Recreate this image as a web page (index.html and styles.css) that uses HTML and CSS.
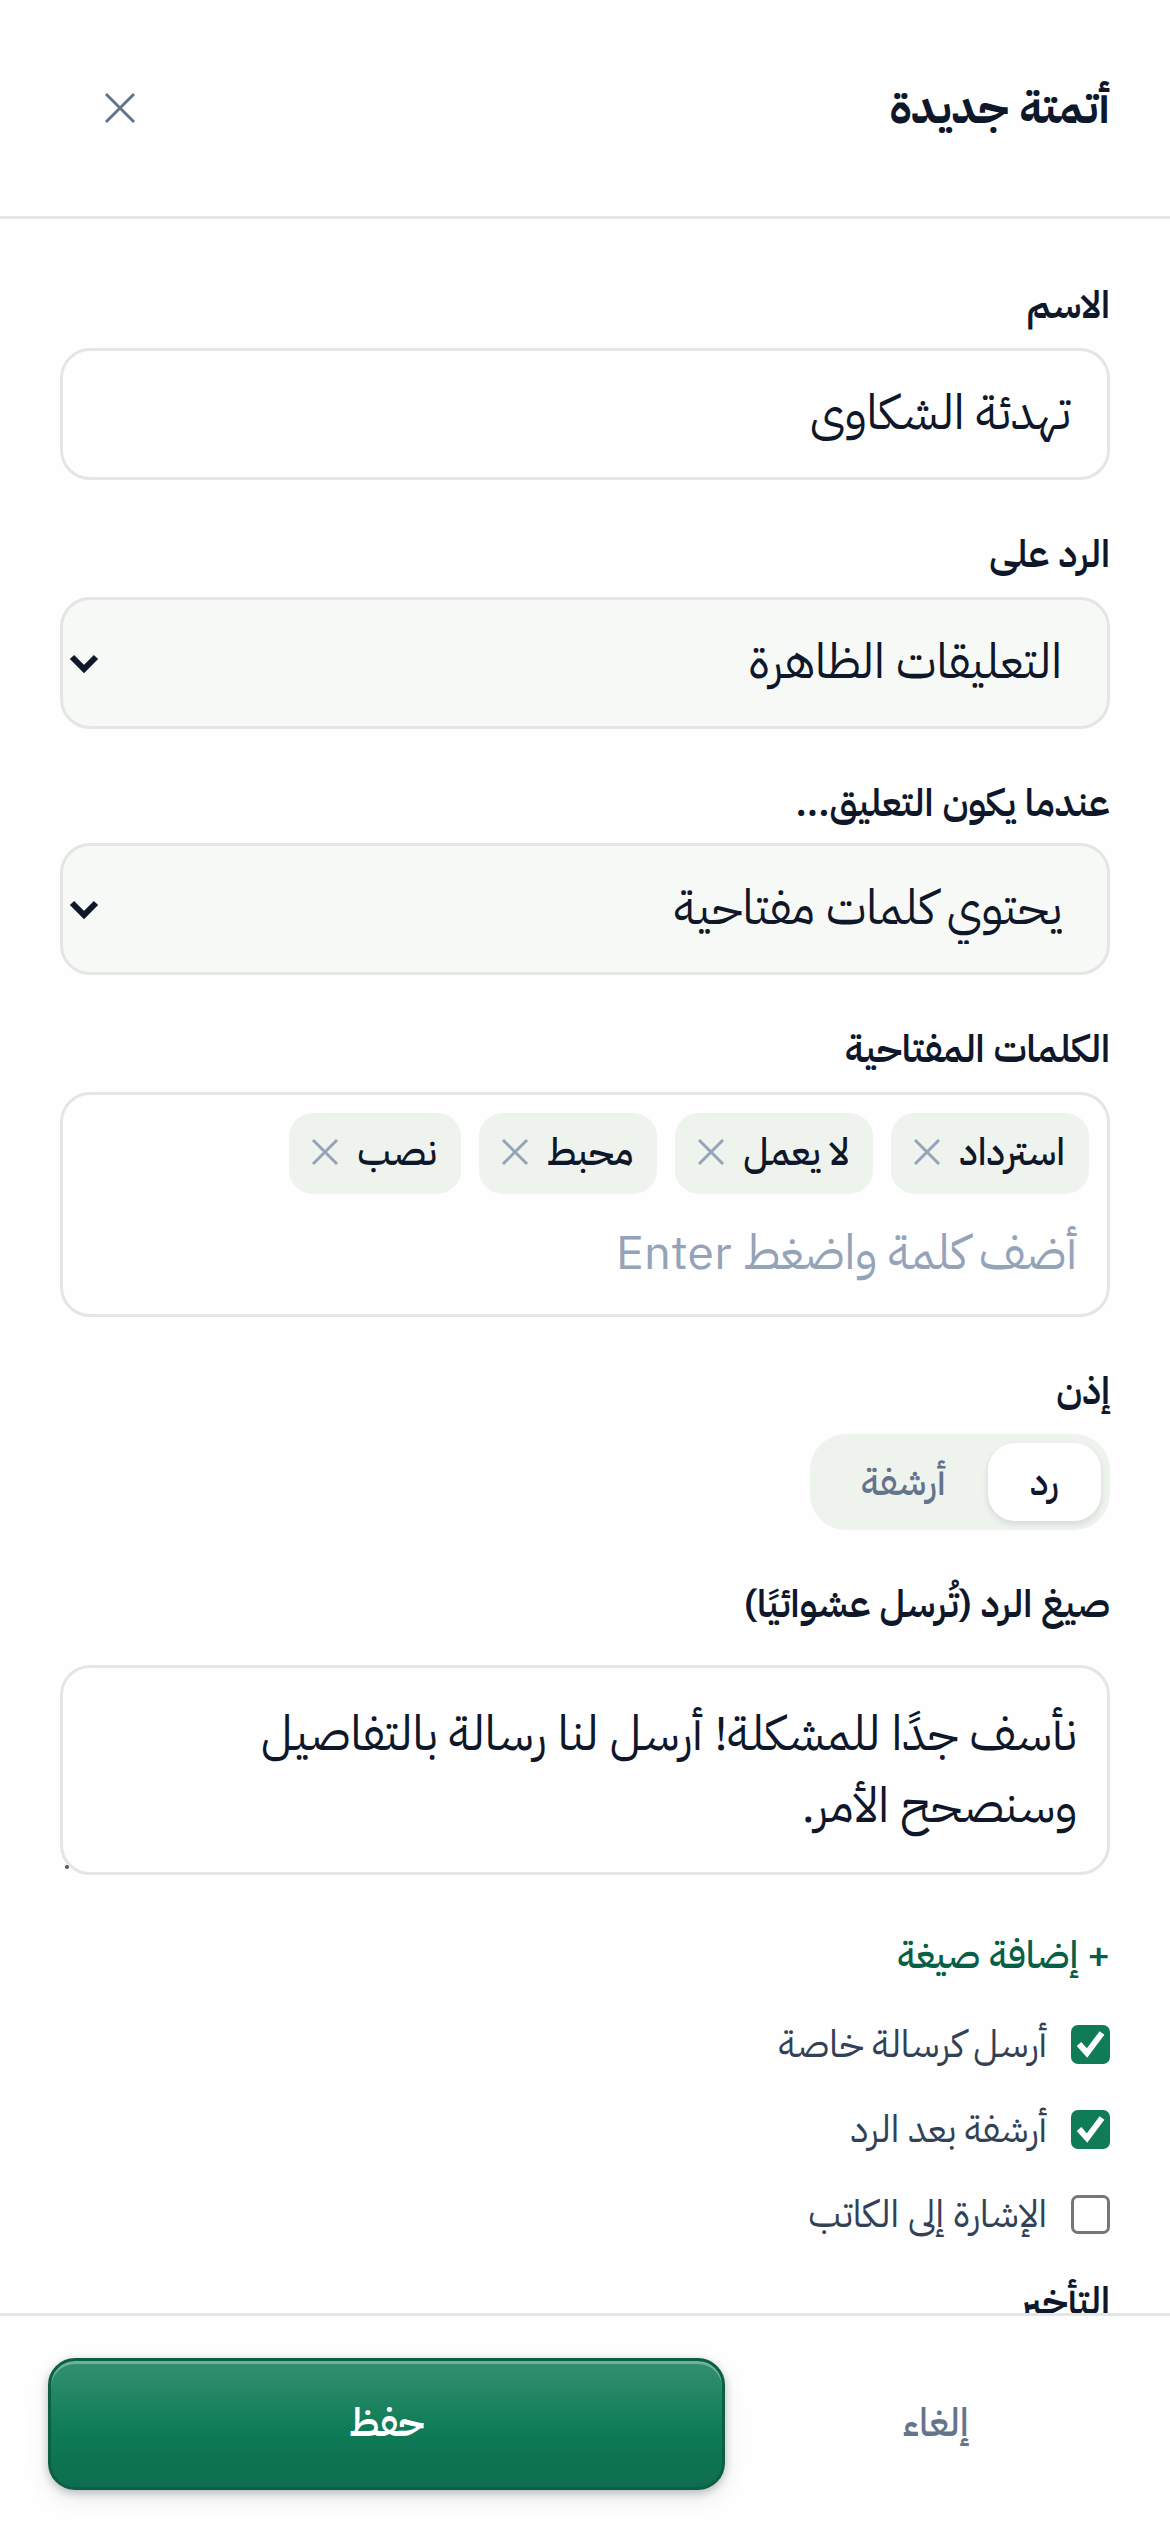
FILE: index.html
```html
<!DOCTYPE html>
<html lang="ar" dir="rtl">
<head>
    <meta charset="UTF-8">
    <meta name="viewport" content="width=device-width, initial-scale=1.0">
    <title>أتمتة جديدة</title>
    <link rel="stylesheet" href="styles.css">
</head>
<body>
    <form class="sheet">
        <header class="sheet-header">
            <h1>أتمتة جديدة</h1>
            <button type="button" class="close-button" aria-label="إغلاق">
                <svg viewBox="0 0 48 48" aria-hidden="true"><path d="M10 10L38 38M38 10L10 38"/></svg>
            </button>
        </header>

        <main class="sheet-body">
            <div class="field">
                <label class="label" for="name">الاسم</label>
                <input class="input" id="name" type="text" value="تهدئة الشكاوى">
            </div>

            <div class="field">
                <label class="label" for="target">الرد على</label>
                <div class="select-wrap">
                    <select class="input select" id="target">
                        <option>التعليقات الظاهرة</option>
                    </select>
                    <svg class="chevron" viewBox="0 0 30 20" aria-hidden="true"><path d="M3 3L15 15L27 3"/></svg>
                </div>
            </div>

            <div class="field field-tight">
                <label class="label" for="condition">عندما يكون التعليق...</label>
                <div class="select-wrap">
                    <select class="input select" id="condition">
                        <option>يحتوي كلمات مفتاحية</option>
                    </select>
                    <svg class="chevron" viewBox="0 0 30 20" aria-hidden="true"><path d="M3 3L15 15L27 3"/></svg>
                </div>
            </div>

            <div class="field">
                <label class="label" for="keywords">الكلمات المفتاحية</label>
                <div class="keywords">
                    <span class="chip">استرداد
                        <button type="button" class="chip-remove" aria-label="إزالة"><svg viewBox="0 0 36 36" aria-hidden="true"><path d="M6 6L30 30M30 6L6 30"/></svg></button>
                    </span>
                    <span class="chip">لا يعمل
                        <button type="button" class="chip-remove" aria-label="إزالة"><svg viewBox="0 0 36 36" aria-hidden="true"><path d="M6 6L30 30M30 6L6 30"/></svg></button>
                    </span>
                    <span class="chip">محبط
                        <button type="button" class="chip-remove" aria-label="إزالة"><svg viewBox="0 0 36 36" aria-hidden="true"><path d="M6 6L30 30M30 6L6 30"/></svg></button>
                    </span>
                    <span class="chip">نصب
                        <button type="button" class="chip-remove" aria-label="إزالة"><svg viewBox="0 0 36 36" aria-hidden="true"><path d="M6 6L30 30M30 6L6 30"/></svg></button>
                    </span>
                    <input class="keyword-input" id="keywords" type="text" placeholder="أضف كلمة واضغط Enter">
                </div>
            </div>

            <div class="field">
                <span class="label" id="action-label">إذن</span>
                <div class="segmented" role="group" aria-labelledby="action-label">
                    <button type="button" class="segment active" aria-pressed="true">رد</button>
                    <button type="button" class="segment" aria-pressed="false">أرشفة</button>
                </div>
            </div>

            <div class="field field-reply">
                <label class="label" for="reply">صيغ الرد (تُرسل عشوائيًا)</label>
                <div class="textarea-wrap">
                    <textarea class="input textarea" id="reply" rows="2">نأسف جدًا للمشكلة! أرسل لنا رسالة بالتفاصيل وسنصحح الأمر.</textarea>
                </div>
            </div>

            <button type="button" class="add-button">+ إضافة صيغة</button>

            <div class="checks">
                <label class="check"><input type="checkbox" checked> أرسل كرسالة خاصة</label>
                <label class="check"><input type="checkbox" checked> أرشفة بعد الرد</label>
                <label class="check"><input type="checkbox"> الإشارة إلى الكاتب</label>
            </div>

            <span class="label">التأخير</span>
        </main>

        <footer class="sheet-footer">
            <button type="button" class="cancel-button">إلغاء</button>
            <button type="submit" class="save-button">حفظ</button>
        </footer>
    </form>
</body>
</html>
```
FILE: styles.css
```css
* {
    box-sizing: border-box;
}

body {
    margin: 0;
    background: #fdfefd;
    color: #0f172a;
    font-family: "IBM Plex Sans Arabic", "Noto Sans Arabic", Inter, "DejaVu Sans", sans-serif;
    font-size: 38px;
}

button,
input,
select,
textarea {
    margin: 0;
    font: inherit;
    color: inherit;
}

button {
    padding: 0;
    border: 0;
    background: none;
    cursor: pointer;
}

svg {
    display: block;
    fill: none;
    stroke: currentColor;
}

.sheet {
    display: flex;
    flex-direction: column;
    height: 100vh;
}

/* Header */
.sheet-header {
    display: flex;
    flex-shrink: 0;
    align-items: center;
    justify-content: space-between;
    height: 219px;
    padding: 0 60px;
    border-bottom: 3px solid #e4e6e4;
}

h1 {
    margin: 0;
    font-size: 45px;
    font-weight: 700;
}

.close-button {
    display: grid;
    place-items: center;
    width: 120px;
    height: 120px;
    color: #64748b;
}

.close-button svg {
    width: 48px;
    stroke-width: 3;
}

/* Form */
.sheet-body {
    flex: 1;
    min-height: 0;
    padding: 60px 60px 0;
    overflow-y: auto;
    scrollbar-width: none;
}

.field {
    display: flex;
    flex-direction: column;
    gap: 12px;
    margin-bottom: 48px;
}

.field-tight {
    gap: 9px;
}

.field-reply {
    gap: 30px;
    margin-bottom: 54px;
}

.label {
    display: block;
    height: 57px;
    font-weight: 600;
    line-height: 54px;
}

.input {
    display: block;
    width: 100%;
    height: 132px;
    padding: 0 36px 3px;
    border: 3px solid #e4e6e4;
    border-radius: 30px;
    background: #fdfefd;
    font-size: 48px;
}

.select-wrap,
.textarea-wrap {
    position: relative;
}

.select {
    padding: 0 45px 3px;
    appearance: none;
    background: #f7f9f7;
}

.chevron {
    position: absolute;
    left: 9px;
    top: 57px;
    width: 30px;
    stroke-width: 6;
}

.keywords {
    display: flex;
    flex-wrap: wrap;
    gap: 18px;
    padding: 18px;
    border: 3px solid #e4e6e4;
    border-radius: 30px;
}

.chip {
    display: flex;
    align-items: center;
    gap: 14px;
    height: 81px;
    padding: 0 24px 3px 18px;
    border-radius: 24px;
    background: #eff3ee;
    font-weight: 500;
}

.chip-remove {
    color: #94a3b8;
}

.chip-remove svg {
    width: 36px;
    stroke-width: 3;
}

.keyword-input {
    flex: 1 0 100%;
    min-width: 0;
    height: 84px;
    padding: 0 12px 3px;
    border: 0;
    outline: 0;
    background: none;
    font-size: 48px;
}

.keyword-input::placeholder {
    color: #94a3b8;
    opacity: 1;
}

.segmented {
    display: flex;
    align-self: flex-start;
    height: 96px;
    padding: 9px;
    border-radius: 36px;
    background: #eff3ee;
}

.segment {
    padding: 0 42px;
    border-radius: 27px;
    color: #64748b;
    font-weight: 500;
}

.segment.active {
    background: #fff;
    color: #0f172a;
    box-shadow: 0 3px 6px rgba(15, 23, 42, 0.12);
}

.textarea {
    height: 210px;
    padding: 30px;
    line-height: 72px;
    resize: none;
    overflow: hidden;
}

/* Resize grip in the rounded corner */
.textarea-wrap::after {
    content: "";
    position: absolute;
    left: 5px;
    bottom: 6px;
    width: 4px;
    height: 4px;
    border-radius: 50%;
    background: #555;
}

.add-button {
    display: block;
    height: 57px;
    padding-bottom: 3px;
    color: #065f46;
    font-weight: 500;
    line-height: 54px;
}

.checks {
    display: flex;
    flex-direction: column;
    gap: 27px;
    margin: 29px 0 32px;
}

.check {
    display: flex;
    align-items: center;
    gap: 24px;
    height: 58px;
    color: #334155;
}

.check input {
    width: 39px;
    height: 39px;
    border: 3px solid #767676;
    border-radius: 7px;
    appearance: none;
}

.check input:checked {
    border: 0;
    background: #0f7b57 url("data:image/svg+xml,%3Csvg xmlns='http://www.w3.org/2000/svg' viewBox='0 0 39 39'%3E%3Cpath d='M8 19L16 28L31 8' fill='none' stroke='white' stroke-width='6'/%3E%3C/svg%3E");
}

/* Footer */
.sheet-footer {
    display: grid;
    grid-template-columns: 11fr 20fr;
    gap: 24px;
    flex-shrink: 0;
    padding: 42px 48px;
    border-top: 3px solid #e4e6e4;
}

.cancel-button,
.save-button {
    height: 132px;
    padding-bottom: 3px;
    border-radius: 27px;
    font-size: 39px;
    font-weight: 500;
}

.cancel-button {
    color: #64748b;
}

.save-button {
    border: 3px solid #0b5f43;
    background: linear-gradient(#33906f, #0f7b57 55%, #0d6e4e);
    box-shadow: inset 0 3px 0 rgba(255, 255, 255, 0.3), 0 3px 9px rgba(15, 23, 42, 0.25), 0 9px 24px rgba(15, 23, 42, 0.08);
    color: #fff;
    font-weight: 600;
}
```
